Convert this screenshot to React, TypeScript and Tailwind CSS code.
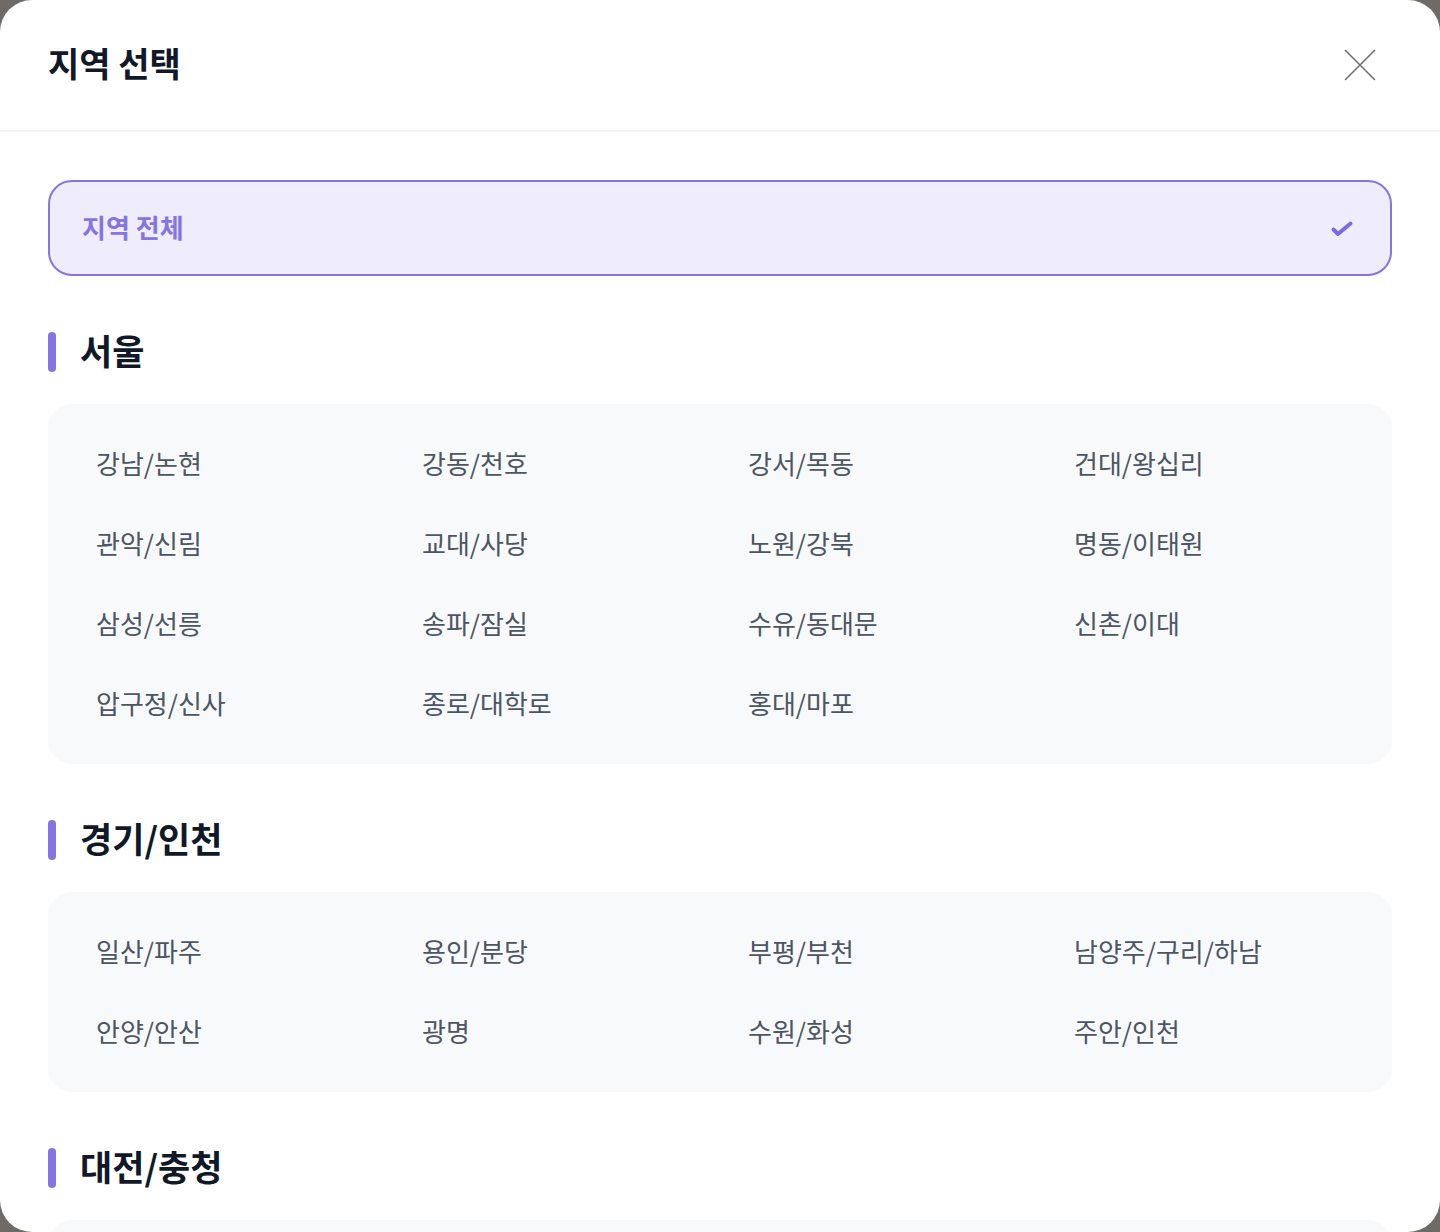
import React from "react";

const sections: { title: string; items: string[] }[] = [
  {
    title: "서울",
    items: [
      "강남/논현",
      "강동/천호",
      "강서/목동",
      "건대/왕십리",
      "관악/신림",
      "교대/사당",
      "노원/강북",
      "명동/이태원",
      "삼성/선릉",
      "송파/잠실",
      "수유/동대문",
      "신촌/이대",
      "압구정/신사",
      "종로/대학로",
      "홍대/마포",
    ],
  },
  {
    title: "경기/인천",
    items: [
      "일산/파주",
      "용인/분당",
      "부평/부천",
      "남양주/구리/하남",
      "안양/안산",
      "광명",
      "수원/화성",
      "주안/인천",
    ],
  },
  {
    title: "대전/충청",
    items: ["대전", "천안/아산", "청주", "세종", "충주/제천"],
  },
];

export default function App() {
  return (
    <div
      className="h-[1232px] w-[1440px] bg-[#6e6a66]"
      style={{ fontFamily: '"Noto Sans CJK KR", "Noto Sans", sans-serif' }}
    >
      <div className="flex h-full w-full flex-col overflow-hidden rounded-[32px] bg-white">
        <div className="flex h-[132px] shrink-0 items-center justify-between border-b-2 border-[#f3f3f5] pl-12 pr-16">
          <h1 className="pb-1 text-[34px] font-bold leading-none text-[#111827]">지역 선택</h1>
          <button className="flex h-8 w-8 items-center justify-center">
            <svg width="32" height="32" viewBox="0 0 32 32" fill="none">
              <path d="M1 1 L31 31 M31 1 L1 31" stroke="#707070" strokeWidth="1.6" />
            </svg>
          </button>
        </div>
        <div className="flex-1 overflow-hidden px-12 pt-12">
          <button className="flex h-[96px] w-full items-center justify-between rounded-3xl border-2 border-[#8574e4] bg-[#efedfb] pl-8 pr-9">
            <span className="pb-1 text-[26px] font-bold text-[#8574e4]">지역 전체</span>
            <svg width="24" height="24" viewBox="0 0 24 24" fill="none">
              <path
                d="M3.5 13.5 L8 18 L20.5 7.5"
                stroke="#7b6ae0"
                strokeWidth="4"
                strokeLinecap="round"
                strokeLinejoin="round"
              />
            </svg>
          </button>
          {sections.map((s) => (
            <div key={s.title} className="mt-14">
              <div className="flex h-10 items-center gap-6">
                <span className="h-10 w-2 rounded-full bg-[#8574e4]" />
                <h2 className="pb-1.5 text-[35px] font-bold leading-none text-[#111827]">{s.title}</h2>
              </div>
              <div className="mt-8 grid grid-cols-4 rounded-3xl bg-[#f8f9fb] p-5">
                {s.items.map((it) => (
                  <div key={it} className="flex h-20 items-center px-7 pb-1 text-[26px] text-[#4b5563]">
                    {it}
                  </div>
                ))}
              </div>
            </div>
          ))}
        </div>
      </div>
    </div>
  );
}
